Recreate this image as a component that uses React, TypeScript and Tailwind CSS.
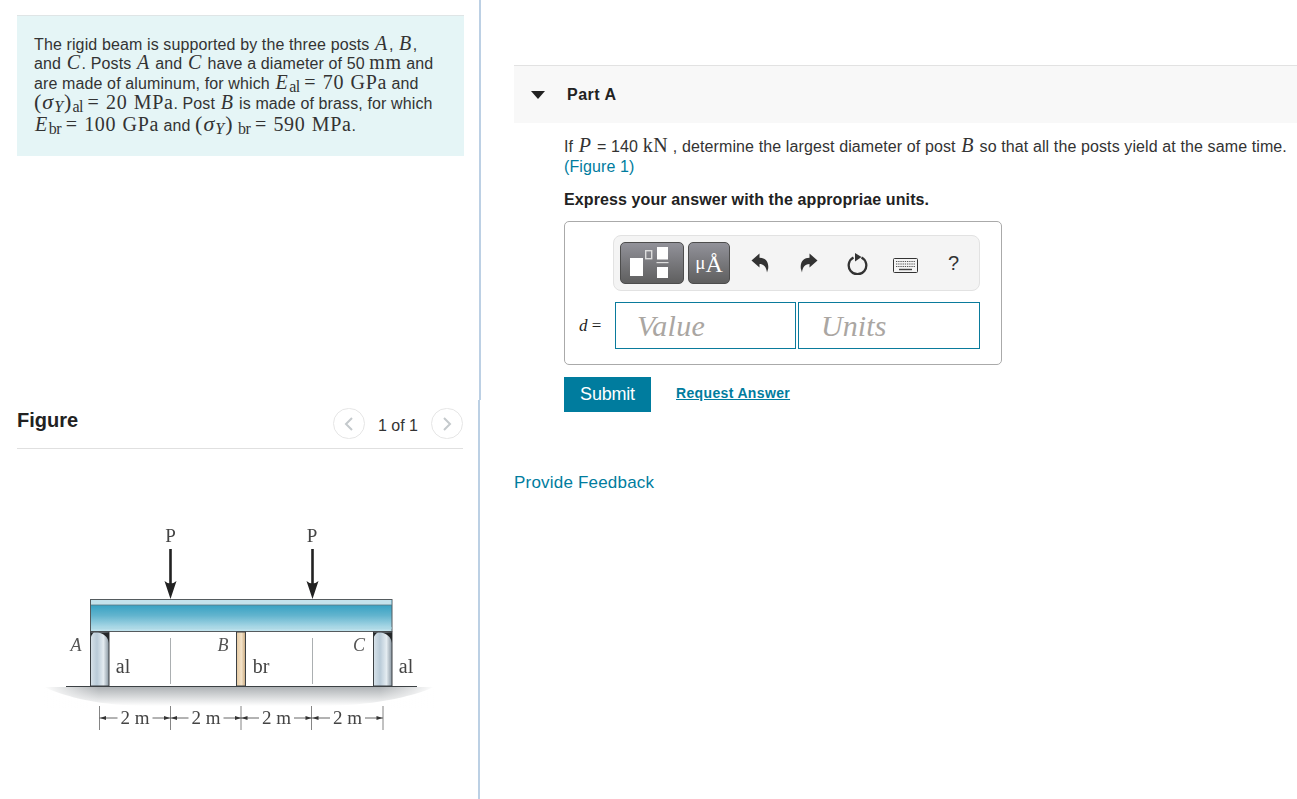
import React from "react";

const M = ({ children, className = "" }: { children: React.ReactNode; className?: string }) => (
  <span className={`font-['Liberation_Serif',serif] text-[20px] leading-[14px] [word-spacing:1px] tracking-[0.6px] ${className}`}>{children}</span>
);
const I = ({ children }: { children: React.ReactNode }) => <M className="italic mx-[1px]">{children}</M>;
const Sub = ({ children }: { children: React.ReactNode }) => (
  <span className="font-['Liberation_Serif',serif] text-[16px] relative top-[3px] leading-none tracking-[-0.5px]">{children}</span>
);
const Eq = ({ children }: { children: React.ReactNode }) => (
  <M className="[word-spacing:1.5px]">{children}</M>
);
const Sigma = () => (
  <M className="text-[22px] tracking-[1px]">(<i>σ<span className="text-[16px] relative top-[3px]">Y</span></i>)</M>
);

function Dim({ x }: { x: number }) {
  return (
    <g>
      <path d={`M${x} 718h18M${x + 53} 718h18`} stroke="#555" strokeWidth="0.9" fill="none" />
      <path d={`M${x + 0.5} 718l6 -2v4zM${x + 70.5} 718l-6 -2v4z`} fill="#333" />
      <text x={x + 35.5} y="723.5" textAnchor="middle" fontSize="19" fill="#444" fontFamily="Liberation Serif, serif">2 m</text>
    </g>
  );
}

function Post({ x, w, id }: { x: number; w: number; id: string }) {
  return <rect x={x} y="632" width={w} height="54" fill={`url(#${id})`} stroke="#3c4144" strokeWidth="1" />;
}

function Diagram() {
  const serif = "Liberation Serif, serif";
  return (
    <svg width="430" height="240" viewBox="20 510 430 240" className="block blur-[0.35px]">
      <defs>
        <linearGradient id="beam" x1="0" y1="0" x2="0" y2="1">
          <stop offset="0" stopColor="#1f97bd" />
          <stop offset="0.5" stopColor="#62b4ce" />
          <stop offset="1" stopColor="#c4e5ef" />
        </linearGradient>
        <linearGradient id="al" x1="0" y1="0" x2="1" y2="0">
          <stop offset="0" stopColor="#d8e3ea" />
          <stop offset="0.35" stopColor="#b9cbd8" />
          <stop offset="0.7" stopColor="#e4ecf1" />
          <stop offset="1" stopColor="#8795a0" />
        </linearGradient>
        <linearGradient id="br" x1="0" y1="0" x2="1" y2="0">
          <stop offset="0" stopColor="#e6c9a0" />
          <stop offset="0.55" stopColor="#f3e2c8" />
          <stop offset="1" stopColor="#c9a97e" />
        </linearGradient>
        <linearGradient id="sh" x1="0" y1="0" x2="0" y2="1">
          <stop offset="0" stopColor="#aeb2b5" />
          <stop offset="1" stopColor="#ffffff" />
        </linearGradient>
        <linearGradient id="fade" x1="0" y1="0" x2="1" y2="0">
          <stop offset="0" stopColor="#fff" stopOpacity="1" />
          <stop offset="0.14" stopColor="#fff" stopOpacity="0" />
          <stop offset="0.86" stopColor="#fff" stopOpacity="0" />
          <stop offset="1" stopColor="#fff" stopOpacity="1" />
        </linearGradient>
      </defs>
      <path d="M44 687H434C412 697 370 706 320 706H150C100 706 66 697 44 687Z" fill="url(#sh)" />
      <rect x="44" y="686" width="390" height="22" fill="url(#fade)" />
      <rect x="90.5" y="599.5" width="301.5" height="32" fill="url(#beam)" stroke="#555b5e" strokeWidth="1" />
      <rect x="91" y="600" width="300.5" height="5" fill="#c3e2ec" />
      <path d="M91 605H392" stroke="#5b7681" strokeWidth="0.8" />
      <path d="M91 628H392" stroke="#a9d6e3" strokeWidth="1" />
      <Post x={90.5} w={18.5} id="al" />
      <Post x={236.5} w={9} id="br" />
      <Post x={373.5} w={18.5} id="al" />
      <path d="M98 632.5H109V643C108 637 104 633.5 98 632.5ZM91 632.5H94C92.5 633.5 91.5 635 91 637Z" fill="#25282a" />
      <path d="M381 632.5H392V643C391 637 387 633.5 381 632.5ZM373.5 632.5H378C376 633.5 374.5 635 373.5 638Z" fill="#25282a" />
      <path d="M66 686.5H417" stroke="#3c4144" strokeWidth="1" />
      <path d="M170.5 638V684M312.5 638V684" stroke="#a2a6a8" strokeWidth="0.9" />
      <path d="M170.5 549V590M312.5 549V590" stroke="#222" strokeWidth="2.6" />
      <path d="M164.5 581L170.5 599L176.5 581Q170.5 586 164.5 581ZM306.5 581L312.5 599L318.5 581Q312.5 586 306.5 581Z" fill="#222" />
      <text x="170.5" y="541.5" textAnchor="middle" fontSize="19" fill="#444" fontFamily={serif}>P</text>
      <text x="312" y="541.5" textAnchor="middle" fontSize="19" fill="#444" fontFamily={serif}>P</text>
      <text x="76" y="650.5" textAnchor="middle" fontSize="18" fontStyle="italic" fill="#555" fontFamily={serif}>A</text>
      <text x="223" y="650.5" textAnchor="middle" fontSize="18" fontStyle="italic" fill="#555" fontFamily={serif}>B</text>
      <text x="359" y="650.5" textAnchor="middle" fontSize="18" fontStyle="italic" fill="#555" fontFamily={serif}>C</text>
      <text x="123" y="672.5" textAnchor="middle" fontSize="20" fill="#444" fontFamily={serif}>al</text>
      <text x="261" y="672.5" textAnchor="middle" fontSize="20" fill="#444" fontFamily={serif}>br</text>
      <text x="406" y="672.5" textAnchor="middle" fontSize="20" fill="#444" fontFamily={serif}>al</text>
      <path d="M99.5 706V730M170.5 706V730M241 706V730M311.5 706V730M383 706V730" stroke="#777" strokeWidth="0.9" />
      <Dim x={99.5} />
      <Dim x={170.5} />
      <Dim x={241} />
      <Dim x={312} />
    </svg>
  );
}

function Chevron({ dir }: { dir: "l" | "r" }) {
  return (
    <span className="w-[32px] h-[31px] rounded-full border border-[#e6e6e6] flex items-center justify-center">
      <svg width="10" height="16" viewBox="0 0 10 16" fill="none" stroke="#c4c9cc" strokeWidth="2">
        <path d={dir === "l" ? "M8 2L2 8L8 14" : "M2 2L8 8L2 14"} />
      </svg>
    </span>
  );
}

const Undo = () => (
  <svg width="18" height="20" viewBox="0 0 18 20">
    <path d="M0.5 7.5L8.5 0.5V4.8C14 4.8 18 8.5 17.2 15.5L16 19.5C15.5 15 13.5 11 8.5 11V14.5Z" fill="#333" />
  </svg>
);
const Redo = () => (
  <svg width="18" height="20" viewBox="0 0 18 20">
    <path d="M17.5 7.5L9.5 0.5V4.8C4 4.8 0 8.5 0.8 15.5L2 19.5C2.5 15 4.5 11 9.5 11V14.5Z" fill="#333" />
  </svg>
);
const Reset = () => (
  <svg width="21" height="22" viewBox="0 0 21 22" fill="none">
    <path d="M6.5 4.6A8.8 8.8 0 1 0 14.5 4.6" stroke="#333" strokeWidth="2.3" />
    <path d="M8 0L14.5 4L8 8.5Z" fill="#333" />
  </svg>
);
const Keyboard = () => (
  <svg width="25" height="15" viewBox="0 0 25 15" fill="none">
    <rect x="0.5" y="0.5" width="24" height="14" rx="1" stroke="#333" fill="#f4f4f4" />
    <path d="M3 3.5H22M3 6H22M3 8.5H22" stroke="#555" strokeWidth="1.2" strokeDasharray="1.3 0.9" />
    <path d="M6 11.5H19" stroke="#444" strokeWidth="1.4" />
  </svg>
);

const btn =
  "h-[42px] rounded-[5px] border border-[#4d4d4d] bg-gradient-to-b from-[#92929a] to-[#5f5f5f] flex items-center justify-center";

export default function App() {
  return (
    <div className="flex w-[1297px] h-[799px] overflow-hidden bg-white font-['Liberation_Sans',Arial,sans-serif] text-[#333]">
      <div className="w-[481px] shrink-0">
        <div className="h-[400px] border-r-2 border-[#bcd0e4] pt-[15px] pl-[17px] pr-[15px]">
          <div className="h-[141px] bg-[#e5f5f6] border-t border-[#dfe5e6] pl-[17px] pt-[19px] text-[16px] leading-[20px] tracking-[0.12px] whitespace-nowrap">
            <div className="h-[19px]">The rigid beam is supported by the three posts <I>A</I>, <I>B</I>,</div>
            <div className="h-[20px]">and <I>C</I>. Posts <I>A</I> and <I>C</I> have a diameter of 50 <M>mm</M> and</div>
            <div className="h-[20px]">are made of aluminum, for which <I>E</I><Sub>al</Sub> <Eq>= 70 GPa</Eq> and</div>
            <div className="h-[20px]"><Sigma /><Sub>al</Sub> <Eq>= 20 MPa</Eq>. Post <I>B</I> is made of brass, for which</div>
            <div className="h-[20px] mt-[2px]"><I>E</I><Sub>br</Sub> <Eq>= 100 GPa</Eq> and <Sigma /> <Sub>br</Sub> <Eq>= 590 MPa</Eq>.</div>
          </div>
        </div>
        <div className="w-[480px] h-[399px] border-r-2 border-[#bcd0e4] pl-[17px] pr-[15px]">
          <div className="h-[49px] border-b border-[#e0e0e0] flex items-start">
            <span className="text-[20px] font-bold leading-[24px] pt-[8px] text-[#222] flex-1">Figure</span>
            <div className="flex items-center pt-[8px]">
              <Chevron dir="l" />
              <span className="mx-[13px] mt-[4px] text-[16px] text-[#333]">1 of 1</span>
              <Chevron dir="r" />
            </div>
          </div>
          <div className="-ml-[17px] mt-[61px] pl-[20px]">
            <Diagram />
          </div>
        </div>
      </div>

      <div className="flex-1 pl-[33px] pt-[65px]">
        <div className="h-[58px] bg-[#f8f8f8] border-t border-[#e2e2e2] flex items-center">
          <svg width="14" height="8" viewBox="0 0 14 8" className="ml-[17px] mt-[1px]">
            <path d="M0 0H14L7 8Z" fill="#222" />
          </svg>
          <span className="ml-[22px] text-[16px] font-bold text-[#222] tracking-[0.5px]">Part A</span>
        </div>
        <div className="pl-[50px]">
          <p className="mt-[14px] text-[16px] leading-[20px] whitespace-nowrap tracking-[0.11px]">
            If <I>P</I> = 140 <M>kN</M> , determine the largest diameter of post <I>B</I> so that all the posts yield at the same time.
            <br />
            <span className="text-[#007c9e]">(Figure 1)</span>
          </p>
          <p className="mt-[13px] text-[16px] leading-[20px] font-bold text-[#222] tracking-[0.11px]">Express your answer with the appropriae units.</p>
          <div className="mt-[11px] w-[438px] h-[144px] border border-[#aaaaaa] rounded-[5px] flex flex-col">
            <div className="ml-[48px] mt-[13px] w-[367px] h-[56px] bg-[#f4f4f4] border border-[#e2e2e2] rounded-[8px] flex items-center pl-[6px]">
              <div className={`${btn} w-[64px]`}>
                <svg width="62" height="40" viewBox="1 1 62 40">
                  <rect x="10" y="16" width="13" height="18" fill="#fff" />
                  <rect x="25.7" y="8.7" width="6" height="8" fill="none" stroke="#ddd" strokeWidth="1.4" />
                  <rect x="37" y="5" width="11" height="12.5" fill="#fff" />
                  <rect x="36.5" y="20" width="12" height="1.2" fill="#ddd" />
                  <rect x="37" y="25" width="11" height="11" fill="#fff" />
                </svg>
              </div>
              <div className={`${btn} w-[42px] ml-[4px] text-white font-['Liberation_Serif',serif] pt-[1px]`}>
                <span className="text-[19px]">μ</span><span className="text-[24px] leading-none">Å</span>
              </div>
              <div className="ml-[21px] w-[18px] flex"><Undo /></div>
              <div className="ml-[31px] w-[18px] flex"><Redo /></div>
              <div className="ml-[29px] flex mt-[2px]"><Reset /></div>
              <div className="ml-[25px] flex mt-[4px]"><Keyboard /></div>
              <span className="ml-[30px] text-[20px] text-[#333]">?</span>
            </div>
            <div className="flex mt-[11px] items-center">
              <span className="w-[50px] pl-[14px] text-[17px] font-['Liberation_Serif',serif] text-[#222] whitespace-nowrap"><i>d</i> =</span>
              <div className="w-[181px] h-[47px] border border-[#0a7b9c] flex items-center pl-[21px] font-['Liberation_Serif',serif] italic text-[30px] tracking-[0.3px] text-[#aaa6a2]">Value</div>
              <div className="w-[182px] h-[47px] ml-[2px] border border-[#0a7b9c] flex items-center pl-[22px] font-['Liberation_Serif',serif] italic text-[30px] tracking-[0.1px] text-[#aaa6a2]">Units</div>
            </div>
          </div>
          <div className="flex mt-[12px] items-start">
            <button className="w-[87px] h-[35px] bg-[#007c9e] text-white text-[18px] tracking-[-0.2px]">Submit</button>
            <a className="ml-[25px] mt-[6px] text-[14px] font-bold text-[#007c9e] underline leading-[20px] tracking-[0.35px]">Request Answer</a>
          </div>
        </div>
        <div className="mt-[60px] text-[17px] leading-[22px] text-[#007c9e] tracking-[0.2px]">Provide Feedback</div>
      </div>
    </div>
  );
}
